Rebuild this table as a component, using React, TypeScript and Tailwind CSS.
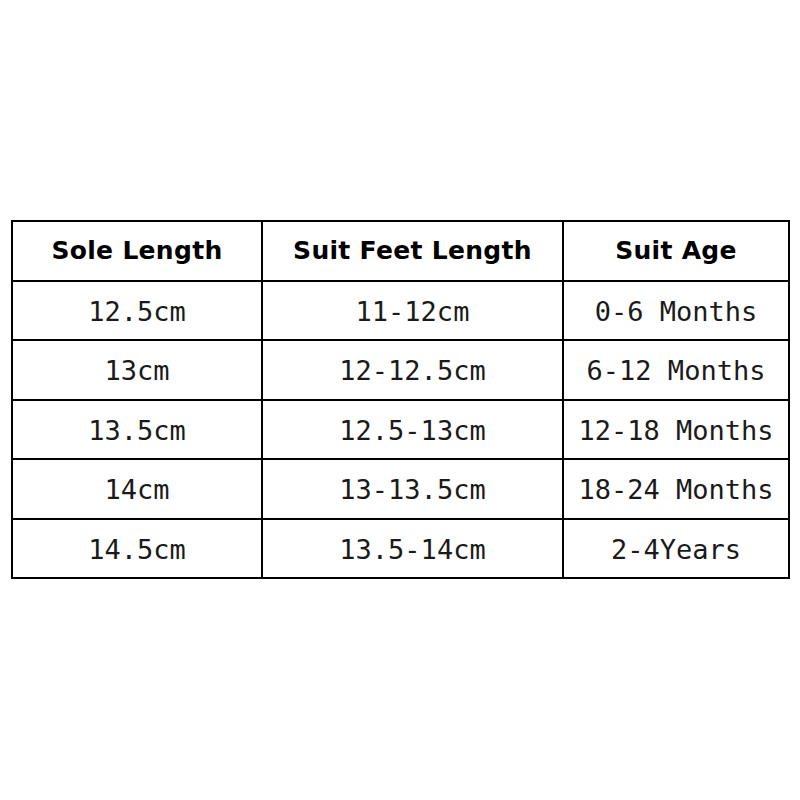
const rows = [
  ["12.5cm", "11-12cm", "0-6 Months"],
  ["13cm", "12-12.5cm", "6-12 Months"],
  ["13.5cm", "12.5-13cm", "12-18 Months"],
  ["14cm", "13-13.5cm", "18-24 Months"],
  ["14.5cm", "13.5-14cm", "2-4Years"],
];

const headers = ["Sole Length", "Suit Feet Length", "Suit Age"];

export default function App() {
  return (
    <div className="h-[800px] w-[800px] bg-white pl-[11px] pt-[220px]">
      <table className="w-[777px] table-fixed border-collapse">
        <colgroup>
          <col className="w-[250px]" />
          <col className="w-[301px]" />
          <col className="w-[226px]" />
        </colgroup>
        <thead>
          <tr className="h-[59.5px]">
            {headers.map((h) => (
              <th
                key={h}
                className="border-2 border-black text-center text-[25px] font-bold text-black [font-family:'DejaVu_Sans',sans-serif] tracking-[0.3px]"
              >
                {h}
              </th>
            ))}
          </tr>
        </thead>
        <tbody>
          {rows.map((r) => (
            <tr key={r[0]} className="h-[59.5px]">
              {r.map((c, i) => (
                <td
                  key={i}
                  className="border-2 border-black pt-[3px] text-center text-[27px] text-[#1a1a1a] [font-family:'DejaVu_Sans_Mono',monospace]"
                >
                  {c}
                </td>
              ))}
            </tr>
          ))}
        </tbody>
      </table>
    </div>
  );
}
